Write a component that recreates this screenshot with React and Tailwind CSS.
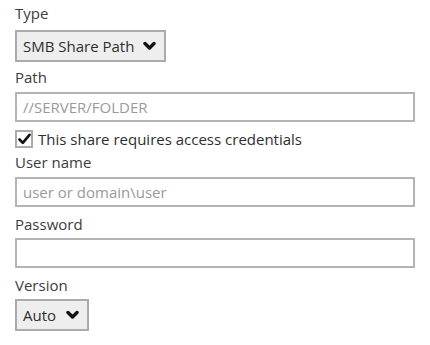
import React from 'react';

const Chevron = () => (
  <svg width="13" height="10" viewBox="0 0 13 10" className="shrink-0">
    <path d="M2 2.5 L6.5 7 L11 2.5" fill="none" stroke="#111" strokeWidth="3.4" strokeLinecap="round" strokeLinejoin="round" />
  </svg>
);

const Select = ({ value, width }) => (
  <div className={`flex items-center justify-between h-[32px] border-2 border-[#ababab] bg-[#eeeeee] pl-[6px] pr-[8px] ${width}`}>
    <span className="text-[15px] text-[#2e2e2e]">{value}</span>
    <Chevron />
  </div>
);

const Input = ({ placeholder, className = '' }) => (
  <div className={`flex items-center h-[30px] w-[400px] border-2 border-[#b4b4b4] bg-white pl-[6px] ${className}`}>
    <span className="text-[15px] text-[#9a9a9a]">{placeholder}</span>
  </div>
);

const Label = ({ children, className = '' }) => (
  <div className={`h-[20px] leading-[20px] text-[15px] text-[#3c3c3c] ${className}`}>{children}</div>
);

export default function App() {
  return (
    <div className="w-[430px] h-[345px] bg-white pl-[15px] pt-[3px]" style={{ fontFamily: '"Open Sans", sans-serif' }}>
      <Label>Type</Label>
      <div className="mt-[7px]">
        <Select value="SMB Share Path" width="w-[151px]" />
      </div>

      <Label className="mt-[5px]">Path</Label>
      <Input placeholder="//SERVER/FOLDER" className="mt-[5px]" />

      <div className="mt-[6px] h-[22px] flex items-center gap-[5px]">
        <div className="w-[18px] h-[18px] border-2 border-[#ababab] bg-white flex items-center justify-center">
          <svg width="13" height="12" viewBox="0 0 13 12">
            <path d="M1.5 6.5 L4.8 9.8 L11.5 1.8" fill="none" stroke="#111" strokeWidth="2.6" strokeLinecap="round" strokeLinejoin="round" />
          </svg>
        </div>
        <span className="text-[15px] text-[#2e2e2e]">This share requires access credentials</span>
      </div>

      <Label className="mt-[2px]">User name</Label>
      <Input placeholder="user or domain\user" className="mt-[5px]" />

      <Label className="mt-[7px]">Password</Label>
      <Input placeholder="" className="mt-[4px]" />

      <Label className="mt-[7px]">Version</Label>
      <div className="mt-[4px]">
        <Select value="Auto" width="w-[74px]" />
      </div>
    </div>
  );
}
